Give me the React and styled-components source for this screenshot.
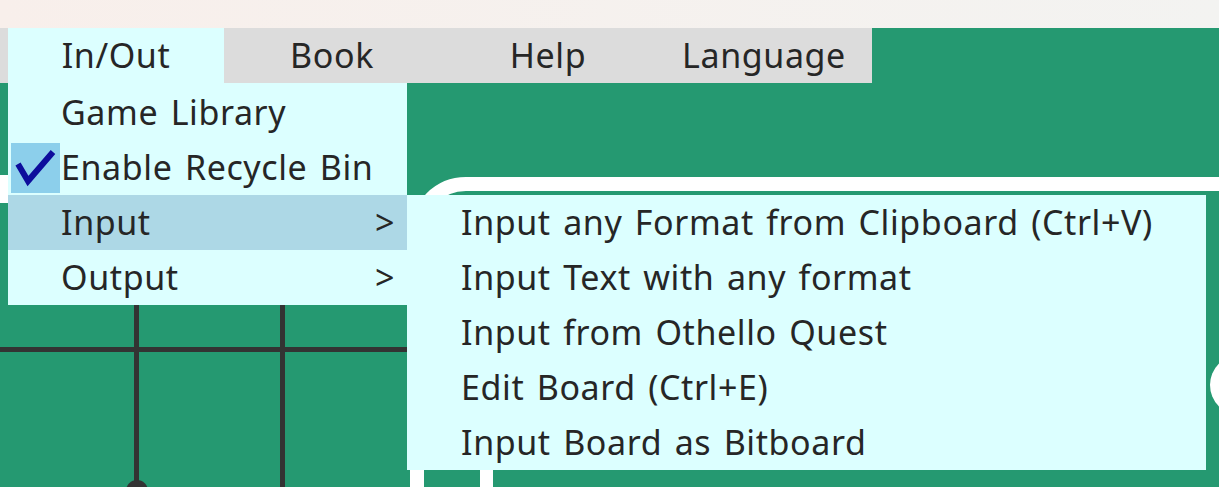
import React from 'react'
import styled, { createGlobalStyle } from 'styled-components';

const GlobalStyle = createGlobalStyle`
    body {
        margin: 0;
        overflow: hidden;
        font-family: "Noto Sans", "Noto Sans CJK JP", sans-serif;
        letter-spacing: 0.6px;
        word-spacing: 3px;
    }
`;

const inputItems = [
    'Input any Format from Clipboard (Ctrl+V)',
    'Input Text with any format',
    'Input from Othello Quest',
    'Edit Board (Ctrl+E)',
    'Input Board as Bitboard',
];

const Checkmark = () => (
    <svg width="49" height="50" viewBox="0 0 49 50">
        <path d="M7 21 L17 38 L42 9" fill="none" stroke="#0d0d9c" strokeWidth="6" strokeLinejoin="miter" />
    </svg>
);

const App = () => {
    return (
        <Page>
            <GlobalStyle />
            <TitleStrip />
            <Main>
                <MenuBar>
                    <MenuItem $open>
                        In/Out
                        <Dropdown>
                            <DropRow>Game Library</DropRow>
                            <DropRow>
                                <CheckBox><Checkmark /></CheckBox>
                                Enable Recycle Bin
                            </DropRow>
                            <DropRow $active>
                                Input
                                <Arrow>&gt;</Arrow>
                                <SubMenu>
                                    {inputItems.map(item => (
                                        <SubRow key={item}>{item}</SubRow>
                                    ))}
                                </SubMenu>
                            </DropRow>
                            <DropRow>
                                Output
                                <Arrow>&gt;</Arrow>
                            </DropRow>
                        </Dropdown>
                    </MenuItem>
                    <MenuItem>Book</MenuItem>
                    <MenuItem>Help</MenuItem>
                    <MenuItem>Language</MenuItem>
                </MenuBar>

                <Content>
                    <Board width="410" height="404" viewBox="0 0 410 404">
                        <rect x="0" y="92" width="8" height="28" fill="#fff" />
                        <rect x="134" y="0" width="5" height="404" fill="#333" />
                        <rect x="280" y="0" width="5" height="404" fill="#333" />
                        <rect x="0" y="264" width="410" height="5" fill="#333" />
                        <circle cx="137" cy="408" r="11" fill="#333" />
                    </Board>
                    <Panel>
                        <PanelBody>
                            <Disc />
                        </PanelBody>
                        <Gutter />
                    </Panel>
                </Content>
            </Main>
        </Page>
    )
}

export default App;

const Page = styled.div`
    width: 1219px;
    height: 487px;
    overflow: hidden;
    display: flex;
    flex-direction: column;
`;

const TitleStrip = styled.div`
    height: 28px;
    flex-shrink: 0;
    background: linear-gradient(90deg, #f8efeb, #f3f3f1);
`;

const Main = styled.div`
    flex: 1;
    background-color: #259971;
    display: flex;
    flex-direction: column;
    overflow: hidden;
`;

const MenuBar = styled.div`
    display: flex;
    align-self: flex-start;
    padding-left: 8px;
    background-color: #dcdcdc;
    position: relative;
    z-index: 5;
`;

const MenuItem = styled.div`
    position: relative;
    width: 216px;
    height: 55px;
    line-height: 55px;
    text-align: center;
    font-size: 34px;
    color: #262626;
    background-color: ${p => (p.$open ? '#dcffff' : 'transparent')};
`;

const Dropdown = styled.div`
    position: absolute;
    top: 100%;
    left: 0;
    width: 399px;
    padding-top: 2px;
    background-color: #dcffff;
    text-align: left;
`;

const DropRow = styled.div`
    position: relative;
    display: flex;
    align-items: center;
    height: 55px;
    line-height: 55px;
    padding-left: 53px;
    padding-right: 12px;
    background-color: ${p => (p.$active ? '#add8e6' : 'transparent')};
`;

const CheckBox = styled.span`
    position: absolute;
    left: 3px;
    top: 3px;
    width: 49px;
    height: 50px;
    background-color: #8ccfeb;
    display: flex;

    > svg {
        display: block;
    }
`;

const Arrow = styled.span`
    margin-left: auto;
`;

const SubMenu = styled.div`
    position: absolute;
    left: 100%;
    top: 0;
    width: 799px;
    background-color: #dcffff;
`;

const SubRow = styled.div`
    height: 55px;
    line-height: 55px;
    padding-left: 54px;
    white-space: nowrap;
`;

const Content = styled.div`
    flex: 1;
    display: flex;
    align-items: flex-start;
`;

const Board = styled.svg`
    display: block;
    flex-shrink: 0;
`;

const Panel = styled.div`
    position: relative;
    flex: 1;
    margin-top: 94px;
    margin-right: -80px;
    height: 420px;
    border: 14px solid #fff;
    border-radius: 56px;
`;

const PanelBody = styled.div`
    display: flex;
    flex-direction: column;
    padding-top: 164px;
`;

const Disc = styled.div`
    align-self: flex-end;
    width: 60px;
    height: 60px;
    margin-right: 15px;
    border-radius: 50%;
    background-color: #fff;
`;

// thin white divider peeking out below the submenu
const Gutter = styled.div`
    position: absolute;
    left: 56px;
    bottom: 0;
    width: 13px;
    height: 150px;
    background-color: #fff;
`;
